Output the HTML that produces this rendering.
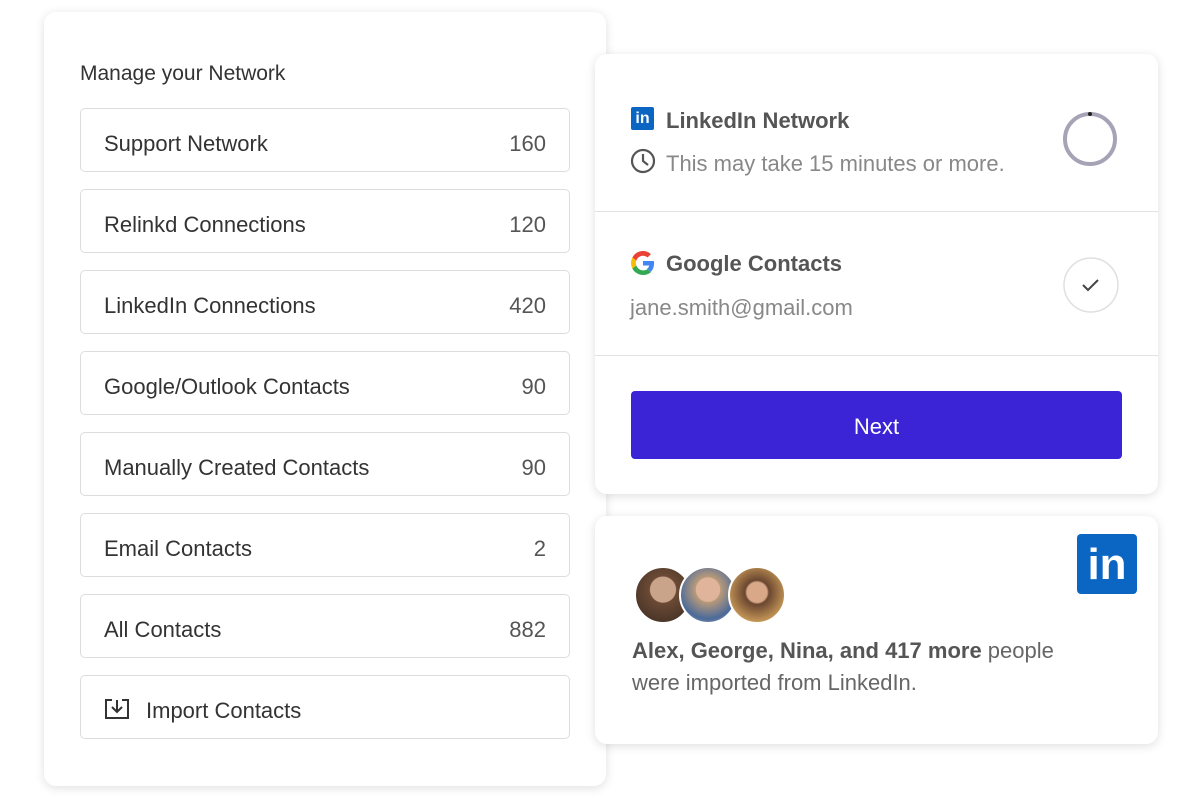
<!DOCTYPE html><html><head><style>
body{margin:0;width:1200px;height:798px;background:#fff;font-family:"Liberation Sans",Arial,sans-serif;position:relative;overflow:hidden}
.card{position:absolute;background:#fff;border-radius:12px;box-shadow:0 2px 10px rgba(0,0,0,.13)}
.row{position:absolute;left:36px;width:488px;height:62px;border:1px solid #ddd;border-radius:5px;font-size:22px;color:#333;line-height:70px}
.row .l{position:absolute;left:23px}.row .r{position:absolute;right:23px;color:#555}
.abs{position:absolute}
</style></head><body>
<div class="card" style="left:44px;top:12px;width:562px;height:774px">
<div class="abs" style="left:36px;top:50px;font-size:21px;color:#333">Manage your Network</div>
<div class="row" style="top:96px"><span class="l">Support Network</span><span class="r">160</span></div>
<div class="row" style="top:177px"><span class="l">Relinkd Connections</span><span class="r">120</span></div>
<div class="row" style="top:258px"><span class="l">LinkedIn Connections</span><span class="r">420</span></div>
<div class="row" style="top:339px"><span class="l">Google/Outlook Contacts</span><span class="r">90</span></div>
<div class="row" style="top:420px"><span class="l">Manually Created Contacts</span><span class="r">90</span></div>
<div class="row" style="top:501px"><span class="l">Email Contacts</span><span class="r">2</span></div>
<div class="row" style="top:582px"><span class="l">All Contacts</span><span class="r">882</span></div>
<div class="row" style="top:663px"><svg class="abs" style="left:23px;top:22px" width="26" height="22" viewBox="0 0 26 22" fill="none" stroke="#333" stroke-width="2"><path d="M8 2H2v18h22V2h-6M13 2v11M8 9l5 5 5-5"/></svg><span class="l" style="left:65px">Import Contacts</span></div>
</div>
<div class="card" style="left:595px;top:54px;width:563px;height:440px">
<div class="abs" style="left:36px;top:53px;width:23px;height:23px;background:#0a66c2;border-radius:2px;color:#fff;font-weight:bold;font-size:16px;text-align:center;line-height:24px">in</div>
<div class="abs" style="left:71px;top:54px;font-size:22px;color:#555;font-weight:bold">LinkedIn Network</div>
<svg class="abs" style="left:35px;top:94px" width="26" height="26" viewBox="0 0 26 26" fill="none" stroke="#555" stroke-width="2.2"><circle cx="13" cy="13" r="11"/><path d="M13 6v7l5 4"/></svg>
<div class="abs" style="left:71px;top:97px;font-size:22px;color:#888">This may take 15 minutes or more.</div>
<svg class="abs" style="left:467px;top:57px" width="56" height="56"><circle cx="28" cy="28" r="25" fill="none" stroke="#a5a3b5" stroke-width="4"/><circle cx="28" cy="3" r="2" fill="#222"/></svg>
<div class="abs" style="left:0;top:157px;width:563px;height:1px;background:#e2e2e2"></div>
<svg class="abs" style="left:36px;top:197px" width="24" height="24" viewBox="0 0 48 48"><path fill="#EA4335" d="M24 9.5c3.5 0 6.6 1.2 9.1 3.6l6.8-6.8C35.8 2.4 30.3 0 24 0 14.6 0 6.6 5.4 2.7 13.3l7.9 6.1C12.5 13.7 17.8 9.5 24 9.5z"/><path fill="#4285F4" d="M46.1 24.5c0-1.6-.1-3.1-.4-4.5H24v9h12.4c-.5 2.9-2.200 5.3-4.6 7l7.5 5.8c4.4-4 6.8-10 6.8-17.3z"/><path fill="#FBBC05" d="M10.5 28.6c-.5-1.4-.8-3-.8-4.6s.3-3.2.8-4.6l-7.9-6.1C1 16.5 0 20.1 0 24s1 7.5 2.7 10.7l7.8-6.1z"/><path fill="#34A853" d="M24 48c6.5 0 11.9-2.1 15.9-5.800l-7.5-5.8c-2.1 1.4-4.8 2.3-8.4 2.3-6.200 0-11.5-4.2-13.4-9.9l-7.9 6.1C6.6 42.6 14.6 48 24 48z"/></svg>
<div class="abs" style="left:71px;top:197px;font-size:22px;color:#555;font-weight:bold">Google Contacts</div>
<div class="abs" style="left:35px;top:241px;font-size:22px;color:#888">jane.smith@gmail.com</div>
<svg class="abs" style="left:467px;top:202px" width="58" height="58"><circle cx="29" cy="29" r="27" fill="none" stroke="#e0e0e0" stroke-width="1.5"/><path d="M21 29l5 5 10-10" fill="none" stroke="#444" stroke-width="2"/></svg>
<div class="abs" style="left:0;top:301px;width:563px;height:1px;background:#e2e2e2"></div>
<div class="abs" style="left:36px;top:337px;width:491px;height:68px;background:#3b24d6;border-radius:4px;color:#fff;font-size:22px;text-align:center;line-height:72px">Next</div>
</div>
<div class="card" style="left:595px;top:516px;width:563px;height:228px">
<div class="abs" style="left:482px;top:18px;width:60px;height:60px;background:#0a66c2;border-radius:4px;color:#fff;font-weight:bold;font-size:44px;text-align:center;line-height:62px">in</div>
<div class="abs" style="left:39px;top:50px;width:54px;height:54px;border-radius:50%;background:radial-gradient(circle at 50% 40%,#c9a48a 0 30%,#6b4a35 32%,#3a2b22 100%);border:2px solid #fff"></div>
<div class="abs" style="left:84px;top:50px;width:54px;height:54px;border-radius:50%;background:radial-gradient(circle at 50% 40%,#e0b49a 0 28%,#b89a7a 30%,#4a6a9a 70%,#d8d0c0 100%);border:2px solid #fff"></div>
<div class="abs" style="left:133px;top:50px;width:54px;height:54px;border-radius:50%;background:radial-gradient(circle at 50% 45%,#d8a888 0 25%,#6a4630 30%,#c89a58 75%,#9a9890 100%);border:2px solid #fff"></div>
<div class="abs" style="left:37px;top:119px;font-size:22px;color:#666;line-height:32px;width:480px"><b style="color:#555">Alex, George, Nina, and 417 more</b> people<br>were imported from LinkedIn.</div>
</div>
</body></html>
